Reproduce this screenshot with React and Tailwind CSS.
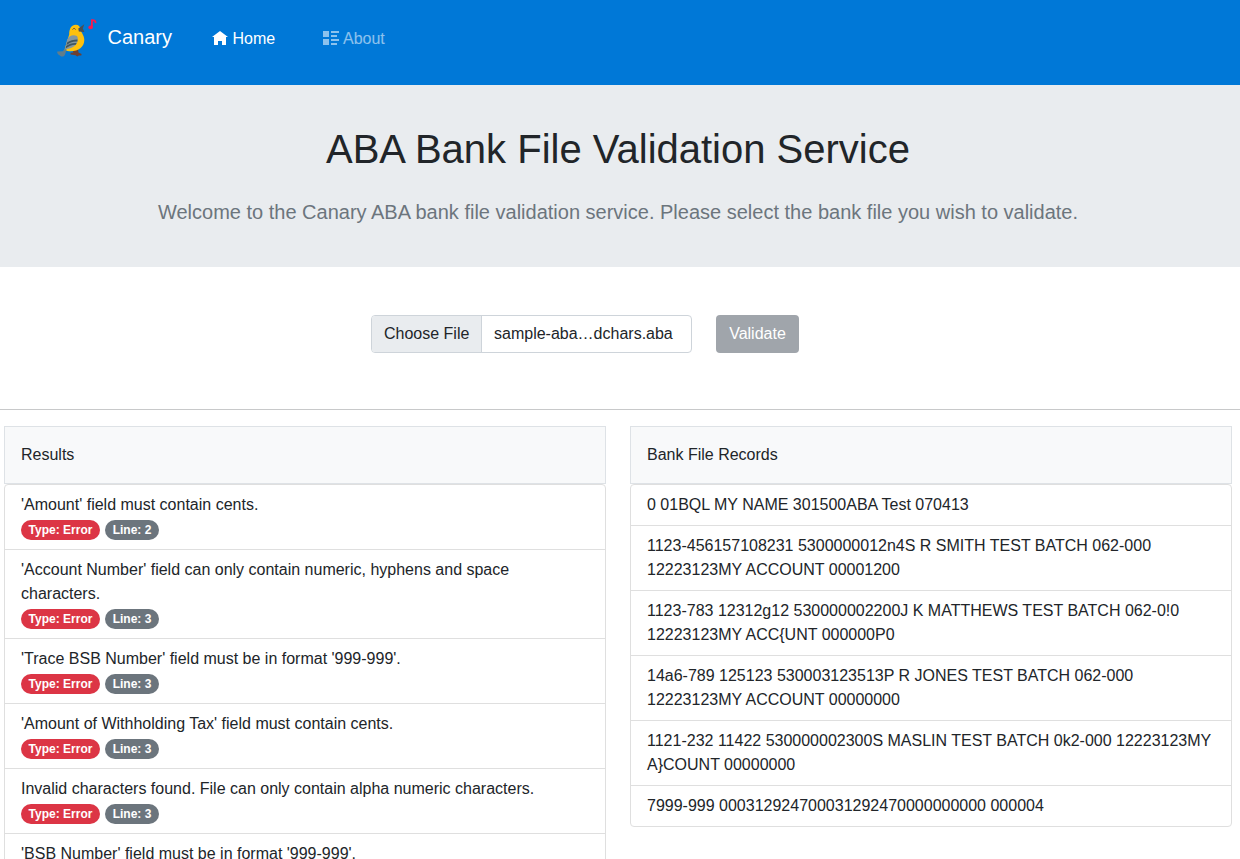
const results = [
  { text: "'Amount' field must contain cents.", line: 2 },
  { text: "'Account Number' field can only contain numeric, hyphens and space characters.", line: 3 },
  { text: "'Trace BSB Number' field must be in format '999-999'.", line: 3 },
  { text: "'Amount of Withholding Tax' field must contain cents.", line: 3 },
  { text: "Invalid characters found. File can only contain alpha numeric characters.", line: 3 },
  { text: "'BSB Number' field must be in format '999-999'." },
];

const records = [
  "0 01BQL MY NAME 301500ABA Test 070413",
  "1123-456157108231 5300000012n4S R SMITH TEST BATCH 062-000 12223123MY ACCOUNT 00001200",
  "1123-783 12312g12 530000002200J K MATTHEWS TEST BATCH 062-0!0 12223123MY ACC{UNT 000000P0",
  "14a6-789 125123 530003123513P R JONES TEST BATCH 062-000 12223123MY ACCOUNT 00000000",
  "1121-232 11422 530000002300S MASLIN TEST BATCH 0k2-000 12223123MY A}COUNT 00000000",
  "7999-999 000312924700031292470000000000 000004",
];

function Bird() {
  return (
    <svg className="h-[38px] w-[40px] shrink-0" viewBox="0 0 40 38">
      <path d="M15.5 30.5l5.5-.5.5 3.6 3.1 1.4-.3 1.6-2.4-.2-1.7 1.1-1.6-1.3-5.2-.8.2-1.6 2.8-.3z" fill="#6d4033" />
      <path d="M12.2 15.5c-.1-6.2 2.5-9.8 6.5-9.8 2.8 0 4.6 1.8 4.7 4.8.3 2.6 3.9 5.4 3.9 10.6 0 7-5.9 11.2-13.5 11.2-2.3 0-4.3-.3-6.4-1.2z" fill="#fec10d" />
      <path d="M21.3 9.6l6-4.3-1.5 4.1 1.6 3.6-5.6-.6z" fill="#4b5054" />
      <path d="M15.6 10.5c.9-1.5 2.3-1.4 3 .1" stroke="#5d4037" strokeWidth=".9" fill="none" />
      <path d="M8.9 28.8l-3.1 3.4-5.5.4c-.4 1.4.5 2.9 1.8 3.3l2 1.5c1.6.7 3.5-.4 4-2.2l1.4-4.4z" fill="#607d8b" />
      <path d="M19.8 17c-3.8-1.7-8.2-.1-9.8 4L7.9 30.3c6.2-.4 12.1-3.4 12.8-9 .2-1.8.1-3.3-.9-4.3z" fill="#84979f" />
      <path d="M20.4 22.5c-4-.5-8.4 1.4-10.8 3.6l.5-2.6c2.5-1.9 6.5-3 10.4-3zM18.8 25.7c-3.5-.2-6.8 1.2-10.2 3.8l.5-2.6c3.1-2.1 6.8-3.2 10.5-2.8z" fill="#3f5661" />
      <path d="M34.9 8.3V1.1c1.9-.2 3.8.5 3.7 3" stroke="#f9194f" strokeWidth="1.8" fill="none" />
      <ellipse cx="33.6" cy="8.4" rx="2.3" ry="1.8" fill="#f9194f" />
    </svg>
  );
}

function NavIcon({ d }) {
  return (
    <svg className="size-4 shrink-0" viewBox="0 0 8 8" fill="currentColor">
      <path d={d} />
    </svg>
  );
}

function Panel({ title, children }) {
  return (
    <section>
      <h2 className="h-[58px] border border-[#dee2e6] bg-[#f8f9fa] p-4 text-base">{title}</h2>
      <ul className="divide-y divide-[#dfdfdf] rounded-[4px] border border-[#dfdfdf]">{children}</ul>
    </section>
  );
}

function Badge({ className, children }) {
  return (
    <span className={`flex h-5 items-center justify-center rounded-full text-xs font-bold leading-none text-white ${className}`}>
      {children}
    </span>
  );
}

export default function App() {
  return (
    <div className="h-[859px] overflow-hidden bg-white font-['Liberation_Sans',Arial,sans-serif] text-base text-[#212529]">
      <nav className="flex h-[85px] items-start bg-[#0078d7] pl-[57px] text-white">
        <div className="mt-[19px]"><Bird /></div>
        <a className="mt-[22px] ml-[10.5px] w-[104.5px] text-xl leading-[30px]">Canary</a>
        <a className="mt-[27px] flex w-[111px] gap-[4.5px]">
          <span className="mt-[4px]"><NavIcon d="M4 0l-4 3h1v4h2v-2h2v2h2v-4.03l1 .03-4-3z" /></span>
          Home
        </a>
        <a className="mt-[27px] flex gap-1 text-white/55">
          <span className="mt-[4px]"><NavIcon d="M0 0v3h3v-3h-3zm4 0v1h4v-1h-4zm0 2v1h3v-1h-3zm-4 2v3h3v-3h-3zm4 0v1h4v-1h-4zm0 2v1h3v-1h-3z" /></span>
          About
        </a>
      </nav>
      <header className="h-[182px] bg-[#e9ecef] pt-10 pr-1 text-center">
        <h1 className="text-[40px] leading-[48px]">ABA Bank File Validation Service</h1>
        <p className="mt-6 text-xl leading-[30px] text-[#6c757d]">
          Welcome to the Canary ABA bank file validation service. Please select the bank file you wish to validate.
        </p>
      </header>
      <form className="flex h-[143px] gap-6 border-b border-[#c8c9ca] pt-12 pl-[371px]">
        <div className="flex h-[38px] w-[321px] overflow-hidden rounded-[4px] border border-[#ced4da] leading-9">
          <span className="w-[110px] border-r border-[#ced4da] bg-[#e9ecef] pl-3">Choose File</span>
          <span className="pl-3">sample-aba…dchars.aba</span>
        </div>
        <button type="button" className="h-[38px] w-[83px] rounded-[4px] bg-[#a0a5ab] text-white">Validate</button>
      </form>
      <main className="grid grid-cols-2 items-start gap-6 pt-4 pr-2 pl-1">
        <Panel title="Results">
          {results.map((r) => (
            <li key={r.text} className="px-4 py-2">
              <p>{r.text}</p>
              {r.line && (
                <div className="flex h-6 items-center gap-[5px] pt-[2px]">
                  <Badge className="w-[79px] bg-[#dc3545]">Type: Error</Badge>
                  <Badge className="w-[54px] bg-[#6c757d]">Line: {r.line}</Badge>
                </div>
              )}
            </li>
          ))}
        </Panel>
        <Panel title="Bank File Records">
          {records.map((r) => (
            <li key={r} className="px-4 py-2">{r}</li>
          ))}
        </Panel>
      </main>
    </div>
  );
}
